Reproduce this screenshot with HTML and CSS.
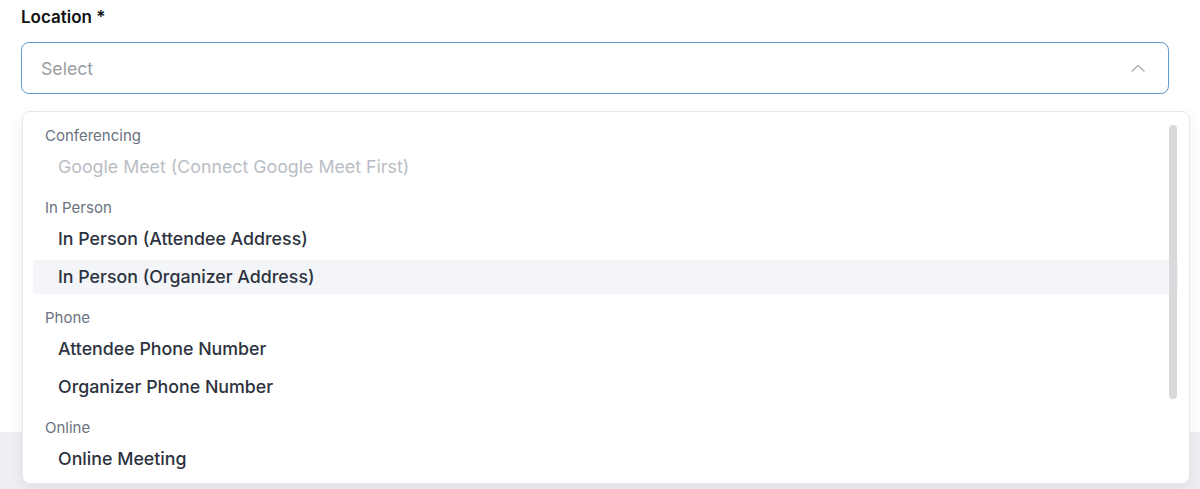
FILE: index.html
```html
<!DOCTYPE html>
<html lang="en">
<head>
    <meta charset="UTF-8">
    <meta name="viewport" content="width=device-width, initial-scale=1.0">
    <title>Location</title>
    <link rel="stylesheet" href="styles.css">
</head>
<body>
    <div class="panel">
        <div class="field">
            <label class="field-label">Location *</label>
            <div class="select">
                <span class="placeholder">Select</span>
                <svg class="chevron" width="14" height="8" viewBox="0 0 14 8">
                    <path d="M1 7 L7 1.5 L13 7" fill="none" stroke="#a8abb0" stroke-width="1.4" stroke-linecap="round" stroke-linejoin="round"/>
                </svg>
            </div>
        </div>
    </div>

    <div class="dropdown">
        <div class="group">
            <div class="group-title">Conferencing</div>
            <div class="option disabled">Google Meet (Connect Google Meet First)</div>
        </div>
        <div class="group">
            <div class="group-title">In Person</div>
            <div class="option">In Person (Attendee Address)</div>
            <div class="option active">In Person (Organizer Address)</div>
        </div>
        <div class="group">
            <div class="group-title">Phone</div>
            <div class="option">Attendee Phone Number</div>
            <div class="option">Organizer Phone Number</div>
        </div>
        <div class="group">
            <div class="group-title">Online</div>
            <div class="option">Online Meeting</div>
        </div>
        <div class="scrollbar"></div>
    </div>
</body>
</html>
```

FILE: styles.css
```css
body {
    margin: 0;
    padding: 0;
    font-family: Inter, "Noto Sans", Arial, sans-serif;
    background: #edeff2;
    height: 489px;
    overflow: hidden;
}

.panel {
    background: #ffffff;
    height: 432px;
    padding: 0 31px 0 21px;
    box-sizing: border-box;
}

.field-label {
    display: block;
    padding-top: 7px;
    height: 42px;
    box-sizing: border-box;
    font-size: 17px;
    font-weight: 600;
    color: #111111;
}

.select {
    height: 52px;
    border: 1.5px solid #5d9bd2;
    border-radius: 8px;
    box-sizing: border-box;
    display: flex;
    align-items: center;
    justify-content: space-between;
    padding: 0 23px 0 19px;
}

.placeholder {
    font-size: 17.7px;
    color: #9a9da3;
}

.chevron {
    display: block;
}

.dropdown {
    position: absolute;
    left: 22px;
    top: 111px;
    width: 1168px;
    height: 373px;
    box-sizing: border-box;
    background: #ffffff;
    border: 1px solid #e6e8eb;
    border-radius: 8px;
    box-shadow: 0 4px 14px rgba(0, 0, 0, 0.07);
    padding: 12px 11px 0 10px;
    overflow: hidden;
}

.group {
    display: flex;
    flex-direction: column;
}

.group + .group {
    margin-top: 10px;
}

.group-title {
    height: 24px;
    line-height: 24px;
    padding-left: 12px;
    font-size: 15px;
    color: #6b7280;
}

.option {
    height: 34px;
    line-height: 34px;
    margin: 2px 0;
    padding-left: 25px;
    font-size: 17.8px;
    font-weight: 500;
    color: #2d3340;
    border-radius: 4px;
}

.option.disabled {
    color: #b9bdc4;
    font-weight: 400;
}

.option.active {
    background: #f3f5f8;
}

.scrollbar {
    position: absolute;
    right: 12px;
    top: 13px;
    width: 8px;
    height: 274px;
    border-radius: 4px;
    background: #d8d9db;
}
```
